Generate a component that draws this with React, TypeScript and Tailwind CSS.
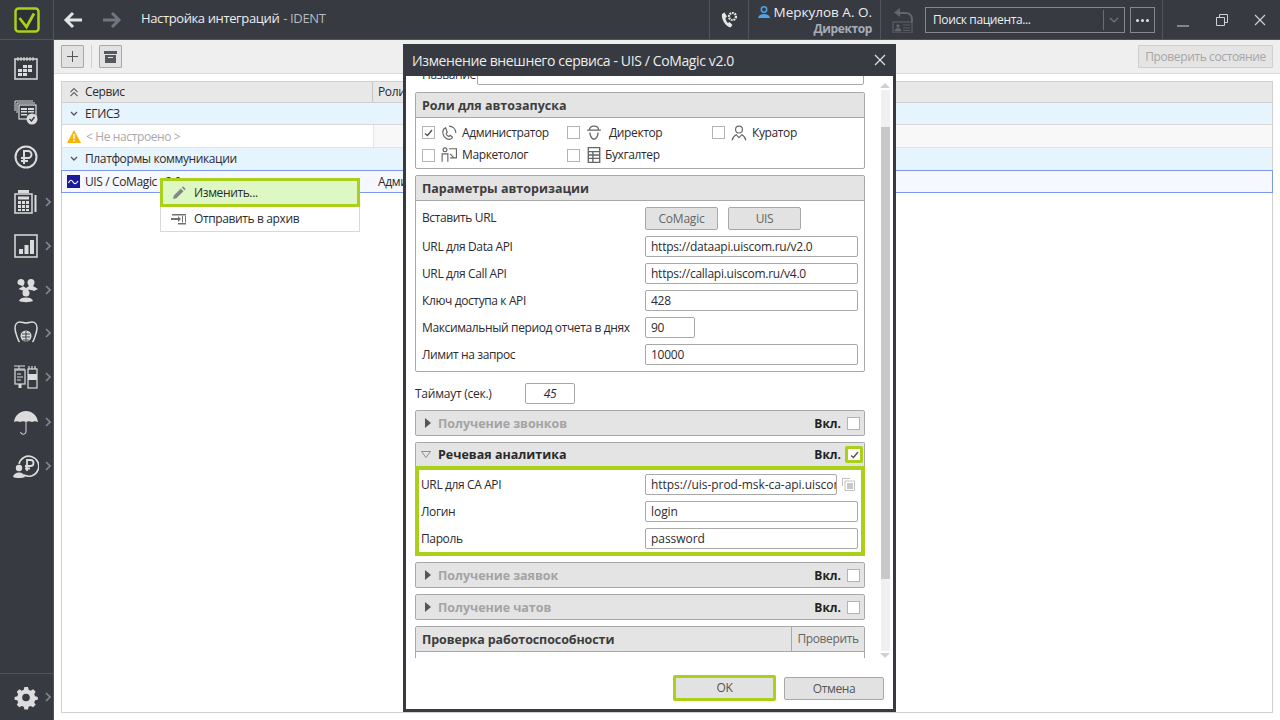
import React from "react";

const S = { fill: "none", stroke: "#dcdcdc", strokeWidth: 1.5 } as const;
const F = { fill: "#dcdcdc" } as const;

function Chev() {
  return (
    <svg width="6" height="10" viewBox="0 0 6 10" className="absolute left-[45px] top-1/2 -translate-y-1/2">
      <path d="M1 1l4 4-4 4" fill="none" stroke="#85888d" strokeWidth="1.6" />
    </svg>
  );
}

function NavItem({ h, chev, children }: { h: number; chev?: boolean; children: React.ReactNode }) {
  return (
    <div className="relative flex w-full items-center justify-center pr-[1px]" style={{ height: h }}>
      <svg width="26" height="26" viewBox="0 0 26 26">{children}</svg>
      {chev && <Chev />}
    </div>
  );
}

function Sidebar() {
  return (
    <div className="flex h-[720px] w-[54px] shrink-0 flex-col border-r border-[#50545b] bg-[#373a40]">
      <div className="flex h-[40px] shrink-0 items-center justify-center border-b border-[#50545b]">
        <svg width="26" height="26" viewBox="0 0 26 26">
          <rect x="1.5" y="1.5" width="23" height="23" rx="3" fill="#2d3035" stroke="#abd01a" strokeWidth="2.5" />
          <path d="M5.500 11l7 9L20 6.500" fill="none" stroke="#abd01a" strokeWidth="2.800" />
        </svg>
      </div>
      <div className="flex flex-1 flex-col pt-[6px]">
        <NavItem h={44}>
          <rect x="2" y="4" width="22" height="20" {...S} />
          <path d="M5 2v4M8 2v4M11 2v4M14 2v4M17 2v4M20 2v4" stroke="#dcdcdc" strokeWidth="1" />
          <path d="M10 10h4v3h-4zM15 10h4v3h-4zM5 14h4v3H5zM10 14h4v3h-4zM15 14h4v3h-4zM5 18h4v3H5zM10 18h4v3h-4z" {...F} />
        </NavItem>
        <NavItem h={44}>
          <path d="M2 12V2h18M4 14V4h18" fill="none" stroke="#dcdcdc" strokeWidth="1" />
          <rect x="6" y="6" width="17" height="14" fill="#373a40" stroke="#dcdcdc" strokeWidth="1.2" />
          <path d="M8 9h6v2H8zM15 9h6v2h-6zM8 12h6v1.5H8zM15 12h6v1.5h-6zM8 15h6v1.5H8z" {...F} />
          <circle cx="19" cy="20" r="5.5" fill="#dcdcdc" />
          <path d="M16.5 20l2 2 3-4" fill="none" stroke="#373a40" strokeWidth="1.4" />
        </NavItem>
        <NavItem h={46}>
          <circle cx="13" cy="13" r="10.5" fill="none" stroke="#dcdcdc" strokeWidth="2" />
          <path d="M11 20V7h4a3.2 3.2 0 010 7H8M8 17h7" fill="none" stroke="#dcdcdc" strokeWidth="2" />
        </NavItem>
        <NavItem h={44} chev>
          <path d="M5 1h11v3H5z" {...F} />
          <rect x="2" y="5" width="17" height="19" {...S} />
          <rect x="5" y="7.5" width="11" height="3" {...F} />
          <path d="M5 12h3v3H5zM9 12h3v3H9zM13 12h3v3h-3zM5 16h3v3H5zM9 16h3v3H9zM13 16h3v3h-3zM5 20h3v2H5zM9 20h3v2H9zM13 20h3v2h-3z" {...F} />
          <path d="M22.500 6v17" stroke="#dcdcdc" strokeWidth="2" />
        </NavItem>
        <NavItem h={44} chev>
          <rect x="2" y="2" width="22" height="22" {...S} />
          <path d="M6 16h4v5H6zM11.5 12h4v9h-4zM17 7h4v14h-4z" {...F} />
        </NavItem>
        <NavItem h={43} chev>
          <path d="M8 2a3.500 3.500 0 013.500 3.500c0 1.500-.8 2.800-1.500 3.500l3 2 3-2c-.7-.7-1.500-2-1.500-3.500a3.500 3.500 0 017 0c0 1.500-.8 2.800-1.500 3.500l5 3-4 2c-1-.6-3-1-5-1.200-2 .2-4 .6-5 1.200l-5.500-2 5-3C5.300 8.300 4.500 7 4.500 5.500A3.500 3.500 0 018 2z" {...F} />
          <circle cx="13" cy="16" r="3.500" {...F} />
          <path d="M6 24c1-2.500 3-3.500 7-3.500s6 1 7 3.500c-3 1.500-11 1.500-14 0z" {...F} />
        </NavItem>
        <NavItem h={44} chev>
          <path d="M7 2c2 0 4 1 6 1s4-1 6-1c3 0 5 2.500 5 6 0 4-1.500 7-2.500 10-1 3-2 4-2 4M7 2C4 2 2 4.500 2 8c0 4 1.500 7 2.500 10 1 3 2 4 2 4" fill="none" stroke="#dcdcdc" strokeWidth="1.500" />
          <circle cx="13" cy="16" r="5.500" fill="#dcdcdc" />
          <path d="M13 11v11M9 14h8M9 17h8M10 20h6" stroke="#373a40" strokeWidth="0.900" />
        </NavItem>
        <NavItem h={44} chev>
          <path d="M1 2h11M1 5h11" stroke="#dcdcdc" strokeWidth="1.200" />
          <path d="M6 2v3" stroke="#dcdcdc" />
          <rect x="2" y="6" width="10" height="14" {...S} strokeWidth={1.200} />
          <path d="M4 10h4M4 13h6M4 16h4" stroke="#dcdcdc" strokeWidth="1" />
          <path d="M5.500 20h3v4h-3z" {...F} />
          <path d="M16 2v3M19 2v3M22 2v3" stroke="#dcdcdc" strokeWidth="1.200" />
          <rect x="15" y="5" width="9" height="19" {...S} strokeWidth={1.200} />
          <rect x="15" y="10" width="9" height="6" {...F} />
        </NavItem>
        <NavItem h={45} chev>
          <path d="M1 13C2 6 7 2 13 2s11 4 12 11c-2-1-4-1-6 0-2-1-4-1-6 0-2-1-4-1-6 0-2-1-4-1-6 0z" {...F} />
          <path d="M13 13v9a2.500 2.500 0 01-5.500 1" fill="none" stroke="#dcdcdc" strokeWidth="1" />
        </NavItem>
        <NavItem h={44} chev>
          <path d="M6 11a10 10 0 1 1 5 11" fill="none" stroke="#dcdcdc" strokeWidth="1.600" />
          <path d="M14 18V7h3.500a3 3 0 010 6H12M12 15.500h5" fill="none" stroke="#dcdcdc" strokeWidth="1.800" />
          <circle cx="6" cy="15" r="3.200" {...F} />
          <path d="M0 24c.5-3 3-4.500 6-4.500s5.500 1.500 6 4.500c-3 1.300-9 1.300-12 0z" {...F} />
        </NavItem>
        <div className="flex-1" />
        <div className="h-[1px] w-full bg-[#50545b]" />
        <NavItem h={46} chev>
          <path d="M11 2h4l.7 3 2.300 1 2.700-1.600 2.800 2.800L21.900 10l1 2.300 3 .7v3l-3 .7-1 2.300 1.600 2.700-2.800 2.800-2.700-1.600-2.300 1-.7 3h-4l-.7-3-2.300-1-2.700 1.600L2.500 21.700 4.100 19l-1-2.300-3-.7v-3l3-.7 1-2.300L2.500 7.200l2.800-2.800L8 6l2.300-1z" transform="translate(1.500 1.300) scale(0.9)" {...F} />
          <circle cx="13" cy="13.500" r="3.800" fill="#373a40" />
        </NavItem>
      </div>
    </div>
  );
}

function TopBar() {
  return (
    <div className="flex h-[40px] shrink-0 items-stretch border-b border-[#50545b] bg-[#373a40] text-[#ededed]">
      <div className="flex w-[87px] shrink-0 items-center">
        <svg width="20" height="18" viewBox="0 0 20 18" className="ml-[9px]">
          <path d="M10 2L3 9l7 7M3 9h16" fill="none" stroke="#e4e4e4" strokeWidth="3" />
        </svg>
        <svg width="20" height="18" viewBox="0 0 20 18" className="ml-[19px]">
          <path d="M10 2l7 7-7 7M17 9H1" fill="none" stroke="#72757a" strokeWidth="3" />
        </svg>
      </div>
      <div className="flex w-[568px] shrink-0 items-center pb-[1px] text-[13px]">
        Настройка интеграций
        <span className="ml-[4px] text-[#b9bbbe]">- IDENT</span>
      </div>
      <div className="flex w-[40px] shrink-0 items-center justify-center border-x border-[#50545b]">
        <svg width="18" height="18" viewBox="0 0 18 18">
          <path d="M4.500 1.500L2 3c-.8 5 3 12 8.500 13.500l2-2.500-3-3-1.500 1C6.500 11 5.500 8.500 5.500 7l1.500-1.500z" fill="#e6e6e6" />
          <circle cx="12.500" cy="5.500" r="3.500" fill="none" stroke="#e6e6e6" strokeWidth="2.200" strokeDasharray="1.800 0.800" />
        </svg>
      </div>
      <div className="flex w-[132px] shrink-0 flex-col items-end justify-center border-r border-[#50545b] pr-[8px]">
        <div className="flex items-center text-[13.500px] leading-[17px] font-medium tracking-normal">
          <svg width="12" height="12" viewBox="0 0 12 12" className="mr-[4px]">
            <circle cx="6" cy="3.500" r="2.700" fill="none" stroke="#4da3ea" strokeWidth="1.500" />
            <path d="M0 12c.5-3 3-4 6-4s5.500 1 6 4z" fill="#4da3ea" />
          </svg>
          Меркулов А. О.
        </div>
        <div className="text-[12px] leading-[15px] font-bold text-[#a5adb9]">Директор</div>
      </div>
      <div className="flex w-[44px] shrink-0 items-center justify-center">
        <svg width="22" height="26" viewBox="0 0 22 26">
          <path d="M8 1L2 5.500 8 10V7h6a5 5 0 015 5v3h2v-3a7 7 0 00-7-7H8z" fill="#62656a" />
          <rect x="1" y="15" width="19" height="11" fill="none" stroke="#62656a" strokeWidth="1" />
          <circle cx="6" cy="19" r="1.700" fill="#62656a" />
          <path d="M3 24c0-2 1.500-2.500 3-2.500S9 22 9 24zM11 18h7M11 21h7M11 23.500h7" fill="#62656a" stroke="#62656a" strokeWidth="0.800" />
        </svg>
      </div>
      <div className="mt-[7px] flex h-[26px] w-[200px] shrink-0 items-center border border-[#85888d] pl-[7px] text-[12px]">
        <span className="flex-1">Поиск пациента...</span>
        <div className="h-[20px] w-[1px] bg-[#6a6d72]" />
        <svg width="20" height="10" viewBox="0 0 20 10">
          <path d="M6 3l4 4 4-4" fill="none" stroke="#72757a" strokeWidth="1.200" />
        </svg>
      </div>
      <div className="mt-[7px] ml-[5px] flex h-[26px] w-[25px] shrink-0 items-center justify-center gap-[2px] border border-[#85888d]">
        <span className="h-[3px] w-[3px] rounded-full bg-[#e0e0e0]" />
        <span className="h-[3px] w-[3px] rounded-full bg-[#e0e0e0]" />
        <span className="h-[3px] w-[3px] rounded-full bg-[#e0e0e0]" />
      </div>
      <div className="ml-[7px] flex min-w-0 flex-1 items-center border-l border-[#50545b]">
        <svg width="90" height="14" viewBox="0 0 90 14" className="ml-[14px] shrink-0">
          <path d="M0 13h12" stroke="#d0d0d0" strokeWidth="1" />
          <path d="M39.500 4.500h8v8h-8zM42.500 4.500v-3h8v8h-3" fill="none" stroke="#d0d0d0" strokeWidth="1" />
          <path d="M78 2l10 10M88 2L78 12" stroke="#d0d0d0" strokeWidth="1.200" />
        </svg>
      </div>
    </div>
  );
}

function MainArea() {
  return (
    <div className="flex min-w-0 flex-1 flex-col bg-white">
      <TopBar />
      <div className="flex h-[34px] shrink-0 items-center border-b border-[#dcdcdc] bg-[#efefef] px-[7px] text-[12px]">
        <div className="flex h-[23px] w-[23px] items-center justify-center rounded-[1px] border border-[#a8a8a8] bg-[#e2e2e2]">
          <svg width="13" height="13" viewBox="0 0 13 13"><path d="M6.500 1v11M1 6.500h11" stroke="#555" strokeWidth="1" /></svg>
        </div>
        <div className="mx-[7px] h-[23px] w-[1px] bg-[#d0d0d0]" />
        <div className="flex h-[23px] w-[23px] items-center justify-center rounded-[1px] border border-[#a8a8a8] bg-[#e2e2e2]">
          <svg width="13" height="12" viewBox="0 0 13 12"><path d="M0 0h13v3H0zM1 4h11v8H1z" fill="#55585d" /><path d="M4 6h5v1H4z" fill="#e2e2e2" /></svg>
        </div>
        <div className="flex-1" />
        <div className="flex h-[23px] w-[135px] items-center justify-center rounded-[1px] border border-[#cfcfcf] bg-[#e4e4e4] text-[#a6a6a6]">
          Проверить состояние
        </div>
      </div>
      <div className="flex-1 p-[7px]">
        <div className="h-full border border-[#d0d0d0] text-[12px] text-[#2e2a2e]">
          <div className="flex h-[21px] items-center border-b border-[#cfcfcf] bg-[#e8e8e8]">
            <div className="flex h-full w-[311px] items-center border-r border-[#c4c4c4]">
              <svg width="10" height="10" viewBox="0 0 10 10" className="mr-[6px] ml-[7px]">
                <path d="M1.500 5L5 1.500 8.500 5M1.500 9L5 5.500 8.500 9" fill="none" stroke="#666" strokeWidth="1.100" />
              </svg>
              Сервис
            </div>
            <div className="pl-[5px]">Роли</div>
          </div>
          <div className="flex h-[22px] items-center border-b border-[#d8d8d8] bg-[#e6f4fe] pt-[1px]">
            <svg width="8" height="6" viewBox="0 0 8 6" className="mr-[7px] ml-[8px]"><path d="M1 1l3 3 3-3" fill="none" stroke="#555" strokeWidth="1.300" /></svg>
            ЕГИСЗ
          </div>
          <div className="flex h-[23px] items-center border-b border-[#e4e4e4]">
            <div className="flex h-full w-[311px] items-center pt-[1px]">
              <svg width="14" height="13" viewBox="0 0 14 13" className="mr-[5px] ml-[5px]">
                <path d="M7 0l7 13H0z" fill="#f7b500" />
                <path d="M6.300 4h1.400v5H6.300zM6.300 10h1.400v1.500H6.300z" fill="#fff" />
              </svg>
              <span className="text-[#a9a9a9]">&lt; Не настроено &gt;</span>
            </div>
            <div className="h-full flex-1 border-l border-[#e4e4e4] bg-[#f8f8f8]" />
          </div>
          <div className="flex h-[22px] items-center bg-[#e6f4fe]">
            <svg width="8" height="6" viewBox="0 0 8 6" className="mr-[7px] ml-[8px]"><path d="M1 1l3 3 3-3" fill="none" stroke="#555" strokeWidth="1.300" /></svg>
            Платформы коммуникации
          </div>
          <div className="-mx-[1px] flex h-[23px] items-center border border-[#7c97ee] bg-[#f5f8ff]">
            <div className="flex h-full w-[311px] items-center">
              <svg width="13" height="13" viewBox="0 0 13 13" className="mr-[5px] ml-[5px]">
                <rect width="13" height="13" fill="#1a1a9c" />
                <path d="M1.500 8c1.500-3.500 3-3.500 4.500-1s3 2 5 -1" fill="none" stroke="#fff" strokeWidth="1.200" />
              </svg>
              UIS / CoMagic v2.0
            </div>
            <div className="pl-[5px]">Администратор</div>
          </div>
        </div>
      </div>
    </div>
  );
}

function ContextMenu() {
  return (
    <div className="absolute top-[178px] left-[160px] w-[200px] border border-[#d8d8d8] bg-white text-[12px] text-[#2e2a2e]">
      <div className="m-[-1px] flex h-[29px] items-center border-[3px] border-[#abd01a] bg-[#def8c4] pl-[8px]">
        <svg width="16" height="16" viewBox="0 0 16 16" className="mr-[7px]">
          <path d="M2 14l.8-3.500 7-7 2.700 2.700-7 7zM10.800 2.500L12 1.300l2.700 2.700-1.200 1.200z" fill="#85888a" />
        </svg>
        Изменить...
      </div>
      <div className="flex h-[25px] items-center pl-[10px]">
        <svg width="16" height="12" viewBox="0 0 16 12" className="mr-[7px]">
          <path d="M1 1h14v1.500H1zM7 10h8v1.500H7zM0 5h7V3l3 3-3 3V7H0z" fill="#6f7275" />
          <path d="M11.500 3v6.500M14.500 3v6.500" stroke="#6f7275" strokeWidth="1" />
        </svg>
        Отправить в архив
      </div>
    </div>
  );
}

function Panel({ title, className, children }: { title: string; className: string; children: React.ReactNode }) {
  return (
    <div className={"overflow-hidden rounded-[2px] border border-[#a8a8a8] " + className}>
      <div className="flex h-[25px] items-center border-b border-[#a8a8a8] bg-[#e4e4e4] pt-[2px] pl-[6px] text-[12.500px] font-bold tracking-normal text-[#3d3d3d]">
        {title}
      </div>
      {children}
    </div>
  );
}

function Box({ checked, className = "" }: { checked?: boolean; className?: string }) {
  return (
    <div className={"flex h-[13px] w-[13px] shrink-0 items-center justify-center border border-[#b4b4b4] bg-white " + className}>
      {checked && (
        <svg width="9" height="8" viewBox="0 0 9 8"><path d="M1 4.500l2.500 2L8 1" fill="none" stroke="#555" strokeWidth="1.400" /></svg>
      )}
    </div>
  );
}

function Role({ w, label, checked, gap, children }: { w: number; label: string; checked?: boolean; gap: number; children: React.ReactNode }) {
  return (
    <div className="flex items-center" style={{ width: w }}>
      <Box checked={checked} />
      <svg width="16" height="16" viewBox="0 0 14 14" className="ml-[6px]" fill="none" stroke="#666" strokeWidth="1">{children}</svg>
      <span style={{ marginLeft: gap }}>{label}</span>
    </div>
  );
}

function Field({ label, value, w = 213 }: { label: string; value: string; w?: number }) {
  return (
    <div className="flex h-[21px] items-center">
      <div className="w-[229px] shrink-0 pl-[6px] whitespace-nowrap">{label}</div>
      <div
        className="flex h-[21px] items-center overflow-hidden rounded-[2px] border border-[#a8a8a8] bg-white pl-[5px] tracking-[-0.25px] whitespace-nowrap"
        style={{ width: w }}
      >
        {value}
      </div>
    </div>
  );
}

function Collapsed({ title, className }: { title: string; className: string }) {
  return (
    <div className={"flex h-[26px] items-center rounded-[2px] border border-[#a8a8a8] bg-[#e4e4e4] " + className}>
      <svg width="8" height="10" viewBox="0 0 8 10" className="mr-[6px] ml-[8px]"><path d="M1 0l6 5-6 5z" fill="#555" /></svg>
      <span className="flex-1 pt-[2px] text-[12.500px] font-bold tracking-[-0.05px] text-[#a3a3a3]">{title}</span>
      <span className="mr-[6px] pt-[1px] text-[12px] font-bold tracking-normal text-[#222]">Вкл.</span>
      <Box className="mr-[4px]" />
    </div>
  );
}

function GreenField({ label, value, w = 213, children }: { label: string; value: string; w?: number; children?: React.ReactNode }) {
  return (
    <div className="flex h-[21px] items-center">
      <div className="w-[226px] shrink-0 pl-[2px]">{label}</div>
      <div className="flex h-[21px] shrink-0 items-center overflow-hidden rounded-[2px] border border-[#a8a8a8] pl-[5px]" style={{ width: w }}>
        <span className="tracking-[-0.05px] whitespace-nowrap">{value}</span>
      </div>
      {children}
    </div>
  );
}

function Dialog() {
  return (
    <div className="absolute top-[44px] left-[403px] flex h-[668px] w-[493px] flex-col border-[3px] border-t-0 border-[#373a40] bg-white text-[12px] text-[#2e2a2e]">
      <div className="-mx-[3px] flex h-[32px] shrink-0 items-center bg-[#373a40] pr-[10px] pl-[9px] text-[14px] text-[#ededed]">
        <span className="flex-1">Изменение внешнего сервиса - UIS / CoMagic v2.0</span>
        <svg width="12" height="12" viewBox="0 0 12 12"><path d="M1 1l10 10M11 1L1 11" stroke="#dcdcdc" strokeWidth="1.300" /></svg>
      </div>
      <div className="relative flex h-[582px] shrink-0 overflow-hidden pl-[9px]">
        <div className="w-[450px] shrink-0">
          <div className="-mt-[12px] flex h-[21px] items-center">
            <div className="w-[62px] shrink-0 pl-[7px] whitespace-nowrap">Название</div>
            <div className="h-[21px] w-[387px] shrink-0 rounded-[2px] border border-[#a8a8a8] bg-white" />
          </div>
          <Panel title="Роли для автозапуска" className="mt-[7px] h-[77px]">
            <div className="flex h-[26px] items-center pt-[3px] pl-[6px]">
              <Role w={145} label="Администратор" checked gap={5}>
                <path d="M4 2.500c-2 1-3 3-2 6 1 3 4 4.500 6 4 1-.3 2-1 2-2l-2-1.500-1 1c-1 0-2.500-1.500-2.500-2.500l1-1L4 2.500zM7 1c3 0 6 2 6 6" />
              </Role>
              <Role w={145} label="Директор" gap={7}>
                <path d="M1 4.500h12M3 4.500c0-2 1-3.500 4-3.500s4 1.500 4 3.500M3.500 6.500c0 3 1.500 6 3.500 6s3.500-3 3.500-6" strokeWidth="1.200" />
              </Role>
              <Role w={120} label="Куратор" gap={5}>
                <circle cx="7" cy="4" r="3" />
                <path d="M1 13.500c.5-3 2.500-4.500 3.500-5L7 11l2.500-2.500c1 .5 3 2 3.500 5" />
              </Role>
            </div>
            <div className="flex h-[22px] items-center pl-[6px]">
              <Role w={145} label="Маркетолог" gap={5}>
                <circle cx="3.500" cy="2.500" r="1.700" />
                <path d="M1 13V6h5v7M7 1.500h6.500v8H8M8 6l3 3" />
              </Role>
              <Role w={145} label="Бухгалтер" gap={3}>
                <path d="M2 .5h10v13H2zM2 4h10M2 7h10M2 10h10M6 4v9" strokeWidth="1.200" />
              </Role>
            </div>
          </Panel>
          <Panel title="Параметры авторизации" className="mt-[6px] h-[197px]">
            <div className="flex flex-col gap-[6px]">
              <div className="flex h-[29px] items-center pt-[6px]">
                <div className="w-[229px] pb-[2px] pl-[6px]">Вставить URL</div>
                <div className="flex h-[23px] w-[73px] items-center justify-center rounded-[2px] border border-[#a8a8a8] bg-[#e2e2e2] tracking-[-0.2px] text-[#666]">CoMagic</div>
                <div className="ml-[10px] flex h-[23px] w-[73px] items-center justify-center rounded-[2px] border border-[#a8a8a8] bg-[#e2e2e2] text-[#666]">UIS</div>
              </div>
              <Field label="URL для Data API" value="https://dataapi.uiscom.ru/v2.0" />
              <Field label="URL для Call API" value="https://callapi.uiscom.ru/v4.0" />
              <Field label="Ключ доступа к API" value="428" />
              <Field label="Максимальный период отчета в днях" value="90" w={50} />
              <Field label="Лимит на запрос" value="10000" />
            </div>
          </Panel>
          <div className="mt-[11px] flex h-[21px] items-center">
            <div className="w-[110px] tracking-[-0.25px]">Таймаут (сек.)</div>
            <div className="flex h-[21px] w-[50px] items-center justify-center rounded-[2px] border border-[#a8a8a8] italic">45</div>
          </div>
          <Collapsed title="Получение звонков" className="mt-[6px]" />
          <div className="mt-[6px] overflow-hidden rounded-t-[2px] border-x border-t border-[#a8a8a8]">
            <div className="flex h-[23px] items-center bg-[#e4e4e4]">
              <svg width="10" height="7" viewBox="0 0 10 7" className="mr-[7px] ml-[5px]"><path d="M.5.500h9L5 6.500z" fill="none" stroke="#777" strokeWidth="0.800" /></svg>
              <span className="flex-1 pt-[2px] text-[12.500px] font-bold tracking-normal text-[#2a2a2a]">Речевая аналитика</span>
              <span className="mr-[4px] pt-[1px] text-[12px] font-bold tracking-normal text-[#222]">Вкл.</span>
              <div className="mr-[1px] rounded-[2px] border-[3px] border-[#abd01a]">
                <div className="flex h-[11px] w-[12px] items-center justify-center bg-white">
                  <svg width="9" height="8" viewBox="0 0 9 8"><path d="M1 4.500l2.500 2L8 1" fill="none" stroke="#555" strokeWidth="1.400" /></svg>
                </div>
              </div>
            </div>
          </div>
          <div className="flex h-[90px] flex-col gap-[6px] border-[4px] border-[#abd01a] pt-[4px]">
            <GreenField label="URL для CA API" value="https://uis-prod-msk-ca-api.uiscom.ru" w={192}>
              <svg width="13" height="13" viewBox="0 0 13 13" className="ml-[5px]">
                <path d="M.5 8V.5H8M3 3h9.500v9.500H3z" fill="none" stroke="#c0c0c0" />
                <rect x="5" y="5" width="6" height="6" fill="#c8c8c8" />
              </svg>
            </GreenField>
            <GreenField label="Логин" value="login" />
            <GreenField label="Пароль" value="password" />
          </div>
          <Collapsed title="Получение заявок" className="mt-[6px]" />
          <Collapsed title="Получение чатов" className="mt-[6px]" />
          <div className="mt-[6px] h-[40px] rounded-[2px] border border-[#a8a8a8]">
            <div className="flex h-[25px] items-center border-b border-[#a8a8a8] bg-[#e4e4e4]">
              <span className="flex-1 pt-[2px] pl-[6px] text-[12.500px] font-bold tracking-[-0.1px] text-[#3d3d3d]">Проверка работоспособности</span>
              <div className="flex h-full w-[73px] items-center justify-center border-l border-[#a8a8a8] text-[#666]">Проверить</div>
            </div>
          </div>
        </div>
        <div className="ml-[15px] flex w-[10px] shrink-0 flex-col items-center pt-[7px]">
          <svg width="10" height="5" viewBox="0 0 10 5"><path d="M5 0l5 5H0z" fill="#d0d0d0" /></svg>
          <div className="mt-[2px] h-[561px] w-[9px] bg-[#f0f0f0] pt-[37px]">
            <div className="h-[452px] w-full bg-[#c8c8c8]" />
          </div>
          <svg width="10" height="5" viewBox="0 0 10 5" className="mt-[2px]"><path d="M0 0h10L5 5z" fill="#d0d0d0" /></svg>
        </div>
      </div>
      <div className="flex flex-1 items-start justify-end gap-[8px] pt-[17px] pr-[9px]">
        <div className="flex h-[26px] w-[103px] items-center justify-center rounded-[2px] border-[3px] border-[#abd01a] bg-[#e2e2e2] text-[#555]">OK</div>
        <div className="mt-[2px] flex h-[23px] w-[100px] items-center justify-center rounded-[2px] border border-[#a8a8a8] bg-[#e2e2e2] text-[#555]">Отмена</div>
      </div>
    </div>
  );
}

export default function App() {
  return (
    <div className="relative flex h-[720px] w-[1280px] overflow-hidden bg-white font-['Open_Sans','Noto_Sans',sans-serif] tracking-[-0.38px]">
      <Sidebar />
      <MainArea />
      <ContextMenu />
      <Dialog />
    </div>
  );
}
